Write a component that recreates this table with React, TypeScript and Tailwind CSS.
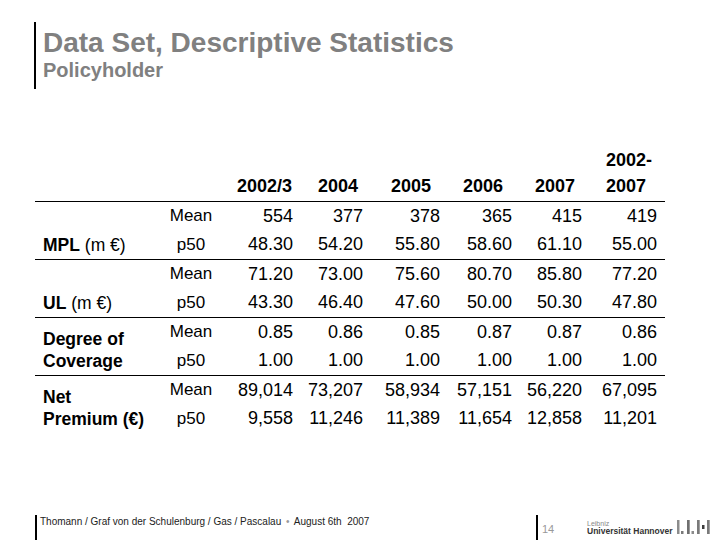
// App.tsx — descriptive statistics slide
type Group = {
  label: React.ReactNode;
  mean: string[];
  p50: string[];
};

const colW = ["w-[79px]", "w-[70px]", "w-[77px]", "w-[72px]", "w-[70px]", "w-[75px]"];

const groups: Group[] = [
  {
    label: (
      <span>
        <b>MPL</b> (m €)
      </span>
    ),
    mean: ["554", "377", "378", "365", "415", "419"],
    p50: ["48.30", "54.20", "55.80", "58.60", "61.10", "55.00"],
  },
  {
    label: (
      <span>
        <b>UL</b> (m €)
      </span>
    ),
    mean: ["71.20", "73.00", "75.60", "80.70", "85.80", "77.20"],
    p50: ["43.30", "46.40", "47.60", "50.00", "50.30", "47.80"],
  },
  {
    label: (
      <b>
        Degree of
        <br />
        Coverage
      </b>
    ),
    mean: ["0.85", "0.86", "0.85", "0.87", "0.87", "0.86"],
    p50: ["1.00", "1.00", "1.00", "1.00", "1.00", "1.00"],
  },
  {
    label: (
      <b>
        Net
        <br />
        Premium (€)
      </b>
    ),
    mean: ["89,014", "73,207", "58,934", "57,151", "56,220", "67,095"],
    p50: ["9,558", "11,246", "11,389", "11,654", "12,858", "11,201"],
  },
];

function DataRow({ name, values, h }: { name: string; values: string[]; h: string }) {
  return (
    <div className={`flex items-center ${h}`}>
      <div className="w-[62px] text-center text-[17px]">{name}</div>
      {values.map((v, i) => (
        <div key={i} className={`${colW[i]} text-right pr-[8px] text-[18px]`}>
          {v}
        </div>
      ))}
    </div>
  );
}

function LuhMark() {
  return (
    <svg width="36" height="15" viewBox="0 0 36 15">
      <rect x="1" y="0" width="2.5" height="14" fill="#8c8c8c" />
      <rect x="5" y="11" width="2.5" height="3" fill="#7a7a7a" />
      <rect x="11" y="0" width="2.7" height="14" fill="#6f6f6f" />
      <rect x="15.5" y="11" width="2.5" height="3" fill="#8c8c8c" />
      <rect x="21" y="0" width="2.7" height="14" fill="#7a7a7a" />
      <rect x="26" y="5" width="2.5" height="4" fill="#3c3c3c" />
      <rect x="31" y="0" width="2.7" height="14" fill="#7a7a7a" />
    </svg>
  );
}

export default function App() {
  return (
    <div className="w-[720px] h-[540px] bg-white flex flex-col font-['Liberation_Sans',Arial,sans-serif] text-black overflow-hidden">
      {/* Title */}
      <div className="flex mt-[22px] ml-[34px]">
        <div className="w-[2px] h-[67px] bg-black" />
        <div className="pl-[7px] pt-[5px] text-[#808080] font-bold">
          <div className="text-[28px] leading-[31px]">Data Set, Descriptive Statistics</div>
          <div className="text-[20px] leading-[24px]">Policyholder</div>
        </div>
      </div>

      {/* Table */}
      <div className="mt-[58px] ml-[35px] w-[630px]">
        <div className="flex items-end h-[55px] border-b border-black font-bold text-[18px] leading-[26px] pb-[2px]">
          <div className="w-[187px]" />
          <div className="w-[79px] text-right pr-[9px]">2002/3</div>
          <div className="w-[70px] text-right pr-[13px]">2004</div>
          <div className="w-[77px] text-right pr-[17px]">2005</div>
          <div className="w-[72px] text-right pr-[17px]">2006</div>
          <div className="w-[70px] text-right pr-[15px]">2007</div>
          <div className="w-[75px] flex justify-end pr-[13px]">
            <div className="text-left">
              2002-
              <br />
              2007
            </div>
          </div>
        </div>

        {groups.map((g, i) => (
          <div
            key={i}
            className={`flex ${i < groups.length - 1 ? "border-b border-black" : ""}`}
          >
            <div className="w-[125px] pl-[8px] flex flex-col justify-end pb-[3px] text-[17.5px] leading-[22px]">
              {g.label}
            </div>
            <div className="flex flex-col">
              <DataRow name="Mean" values={g.mean} h="h-[28px]" />
              <DataRow name="p50" values={g.p50} h="h-[29px]" />
            </div>
          </div>
        ))}
      </div>

      {/* Footer */}
      <div className="mt-auto flex h-[25px] pl-[35px]">
        <div className="w-[501px] flex">
          <div className="w-[2px] h-full bg-black" />
          <div className="pl-[3px] text-[10px] leading-[14px] text-[#222]">
            Thomann / Graf von der Schulenburg / Gas / Pascalau{" "}
            <span className="text-[#999] mx-[2px]">•</span> August 6th&nbsp; 2007
          </div>
        </div>
        <div className="w-[51px] flex">
          <div className="w-[2px] h-full bg-black" />
          <div className="pl-[4px] mt-[9px] text-[11px] leading-[11px] text-[#999]">14</div>
        </div>
        <div className="flex mt-[5px]">
          <div className="flex flex-col">
            <div className="text-[7px] leading-[7px] text-[#888]">Leibniz</div>
            <div className="text-[8.5px] leading-[9px] font-semibold text-[#333]">
              Universität Hannover
            </div>
          </div>
          <div className="ml-[3px]">
            <LuhMark />
          </div>
        </div>
      </div>
    </div>
  );
}
